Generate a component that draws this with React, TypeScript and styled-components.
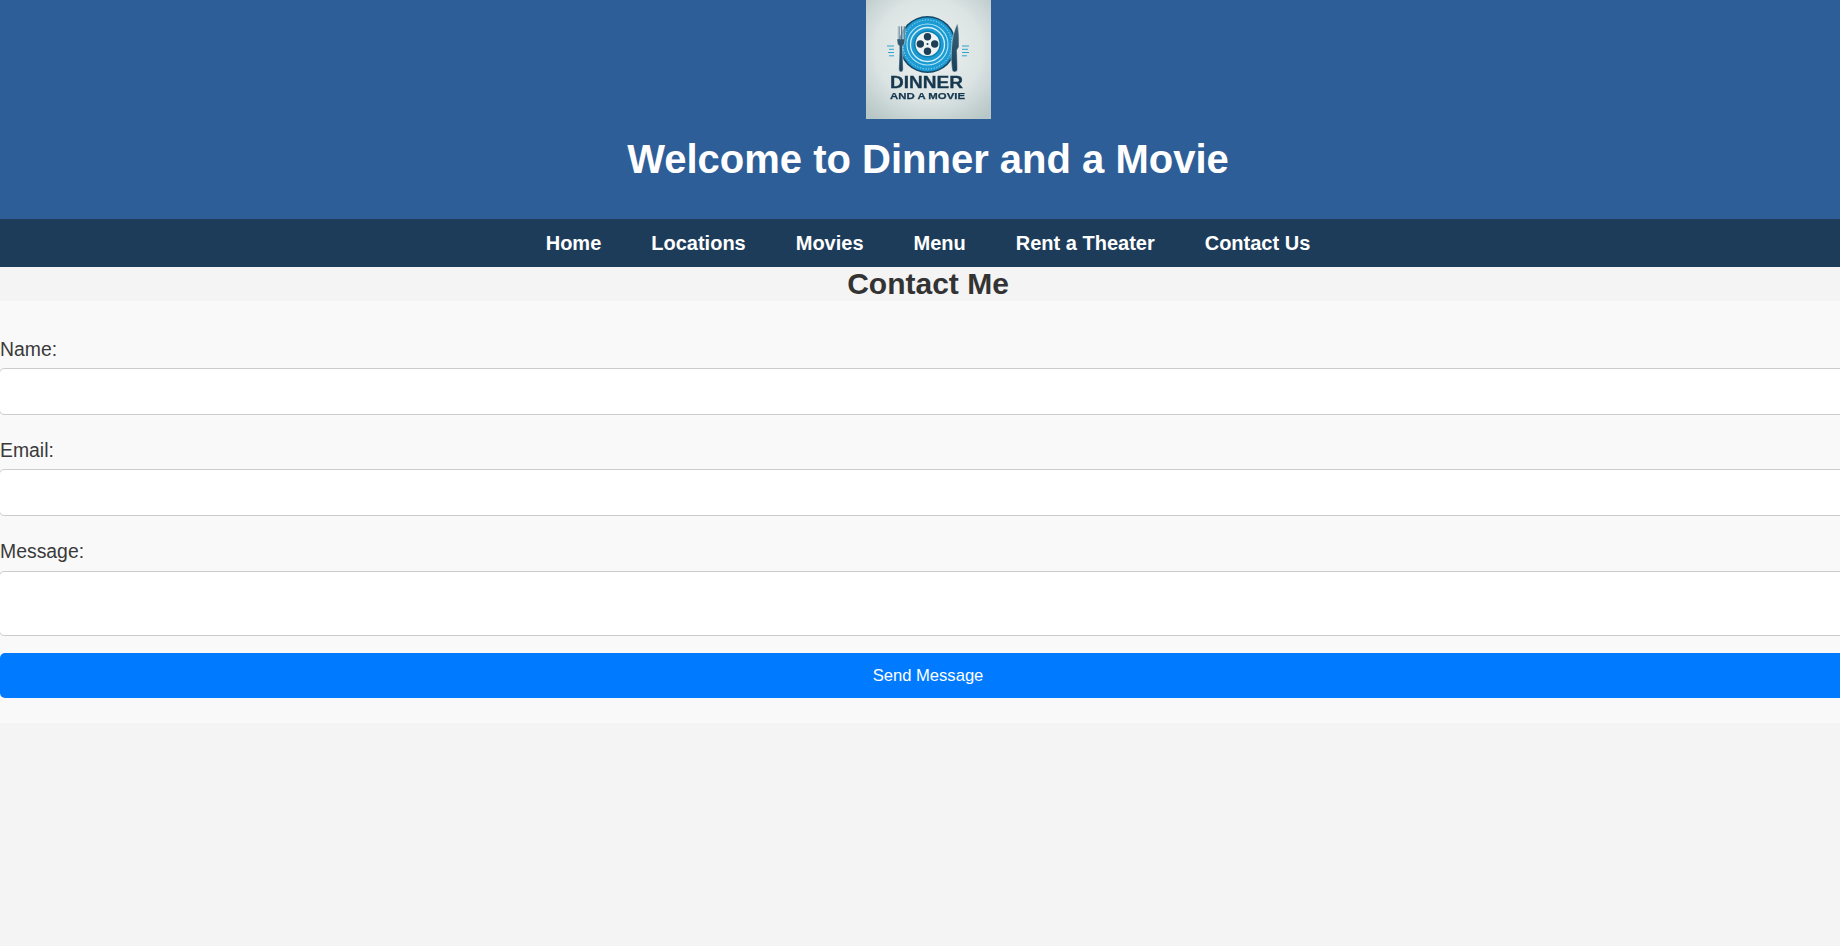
import styled, { createGlobalStyle } from 'styled-components';

const GlobalStyle = createGlobalStyle`
  html, body {
    margin: 0;
    padding: 0;
    overflow: hidden;
    background: #f4f4f4;
  }
  body {
    font-family: "Liberation Sans", Arial, sans-serif;
    color: #333;
  }
`;

const NAV_LINKS = ['Home', 'Locations', 'Movies', 'Menu', 'Rent a Theater', 'Contact Us'];

function Logo() {
  return (
    <LogoSvg viewBox="0 0 125 119" role="img" aria-label="Dinner and a Movie logo">
      <defs>
        <radialGradient id="logoBg" cx="50%" cy="42%" r="72%">
          <stop offset="0%" stopColor="#eef1f1" />
          <stop offset="60%" stopColor="#dbe3e3" />
          <stop offset="100%" stopColor="#b7c6c6" />
        </radialGradient>
        <linearGradient id="cutlery" x1="0" y1="0" x2="0" y2="1">
          <stop offset="0%" stopColor="#3d6479" />
          <stop offset="100%" stopColor="#17405a" />
        </linearGradient>
        <filter id="soft" x="-5%" y="-5%" width="110%" height="110%">
          <feGaussianBlur stdDeviation="0.4" />
        </filter>
      </defs>
      <rect width="125" height="119" fill="url(#logoBg)" />
      <g filter="url(#soft)">
        <circle cx="61.500" cy="44.500" r="28.500" fill="#154a68" />
        <circle cx="61.500" cy="44.500" r="27" fill="#1a9ad3" />
        <circle cx="61.500" cy="44.500" r="24.500" fill="none" stroke="#d6eff7" strokeWidth="0.8" strokeDasharray="1.2 1.6" />
        <circle cx="61.500" cy="44.500" r="20.500" fill="none" stroke="#a9e2f4" strokeWidth="1.1" />
        <circle cx="61.500" cy="44.500" r="17" fill="none" stroke="#d3f0f8" strokeWidth="1.3" />
        <circle cx="61.500" cy="44" r="13.500" fill="#0f7fae" />
        <circle cx="61.500" cy="44" r="12" fill="#eef4f5" />
        <circle cx="61.500" cy="36.800" r="3.700" fill="#1a3f57" />
        <circle cx="61.500" cy="51.200" r="3.700" fill="#1a3f57" />
        <circle cx="54.300" cy="44" r="3.700" fill="#1a3f57" />
        <circle cx="68.700" cy="44" r="3.700" fill="#1a3f57" />
        <circle cx="61.500" cy="44" r="1" fill="#1a3f57" />
        <path d="M31 26v14q0 5 2.500 6l-.7 23q0 3 2.200 3t2.200-3l-.7-23q2.500-1 2.500-6V26h-1.400v13h-1.100V26h-1.600v13h-1.100V26h-1.400v13h-1.100V26z" fill="url(#cutlery)" stroke="#e9eeee" strokeWidth="0.5" />
        <path d="M86 69q-1.500-9-.5-21q1-15 6-25q2 10 1.500 24l-2 3l.5 19q0 3-2.800 3t-2.700-3z" fill="url(#cutlery)" stroke="#e9eeee" strokeWidth="0.5" />
        <path d="M21 46h7M23 49.300h5M22 52.500h6M23 55.800h5M96 46h7M96 49.300h6M96 52.500h7M96 55.800h5" stroke="#2fa5cf" strokeWidth="1" />
        <LogoTitle x="24" y="88" textLength="73" lengthAdjust="spacingAndGlyphs">DINNER</LogoTitle>
        <LogoSub x="24" y="98.500" textLength="75" lengthAdjust="spacingAndGlyphs">AND A MOVIE</LogoSub>
      </g>
    </LogoSvg>
  );
}

function App() {
  return (
    <Page>
      <GlobalStyle />
      <Header>
        <Logo />
        <Title>Welcome to Dinner and a Movie</Title>
      </Header>
      <Nav>
        {NAV_LINKS.map((link) => (
          <NavLink key={link} href="#">
            {link}
          </NavLink>
        ))}
      </Nav>
      <Heading>Contact Me</Heading>
      <Form onSubmit={(e) => e.preventDefault()}>
        <Label htmlFor="name">Name:</Label>
        <Input id="name" type="text" />
        <Label htmlFor="email">Email:</Label>
        <Input id="email" type="email" />
        <Label htmlFor="message">Message:</Label>
        <TextArea id="message" />
        <SendButton type="submit">Send Message</SendButton>
      </Form>
    </Page>
  );
}

const Page = styled.div`
  width: 1856px;
  min-height: 946px;
  background: #f4f4f4;
`;

const Header = styled.header`
  display: flex;
  flex-direction: column;
  align-items: center;
  height: 219px;
  background: #2e5e97;
`;

const LogoSvg = styled.svg`
  display: block;
  width: 125px;
  height: 119px;
  margin-left: 1px;
  flex: none;
`;

const LogoTitle = styled.text`
  font-family: "Liberation Sans", Arial, sans-serif;
  font-weight: 700;
  font-size: 16.5px;
  fill: #17384f;
  stroke: #17384f;
  stroke-width: 0.3px;
`;

const LogoSub = styled.text`
  font-family: "Liberation Sans", Arial, sans-serif;
  font-weight: 700;
  font-size: 9.5px;
  fill: #17384f;
  stroke: #17384f;
  stroke-width: 0.25px;
`;

const Title = styled.h1`
  margin: 17px 0 0;
  font-size: 40px;
  line-height: 46px;
  font-weight: 700;
  color: #fff;
`;

const Nav = styled.nav`
  display: flex;
  justify-content: center;
  align-items: center;
  gap: 50px;
  height: 48px;
  background: #1d3c5a;
`;

const NavLink = styled.a`
  color: #fff;
  font-size: 20px;
  font-weight: 700;
  text-decoration: none;
`;

const Heading = styled.h2`
  margin: 0;
  height: 34px;
  font-size: 30px;
  line-height: 33px;
  font-weight: 700;
  text-align: center;
  color: #333;
`;

const Form = styled.form`
  display: flex;
  flex-direction: column;
  height: 422px;
  padding-top: 37px;
  box-sizing: border-box;
  background: #f9f9f9;
`;

const Label = styled.label`
  font-size: 19.4px;
  line-height: 23px;
  margin-bottom: 7px;
  color: #3a3a3a;
`;

const Input = styled.input`
  display: block;
  width: calc(100% + 1px);
  height: 47px;
  box-sizing: border-box;
  margin: 0 0 24px -1px;
  background: #fff;
  border: 1px solid #ccc;
  border-radius: 5px;
  outline: none;
`;

const TextArea = styled.textarea`
  display: block;
  width: calc(100% + 1px);
  height: 65px;
  box-sizing: border-box;
  margin: 1px 0 17px -1px;
  background: #fff;
  border: 1px solid #ccc;
  border-radius: 5px;
  outline: none;
  resize: none;
`;

const SendButton = styled.button`
  display: block;
  width: 100%;
  height: 45px;
  background: #007bff;
  color: #fff;
  font-family: "Liberation Sans", Arial, sans-serif;
  font-size: 16.6px;
  border: none;
  border-radius: 5px;
`;

export default App;
